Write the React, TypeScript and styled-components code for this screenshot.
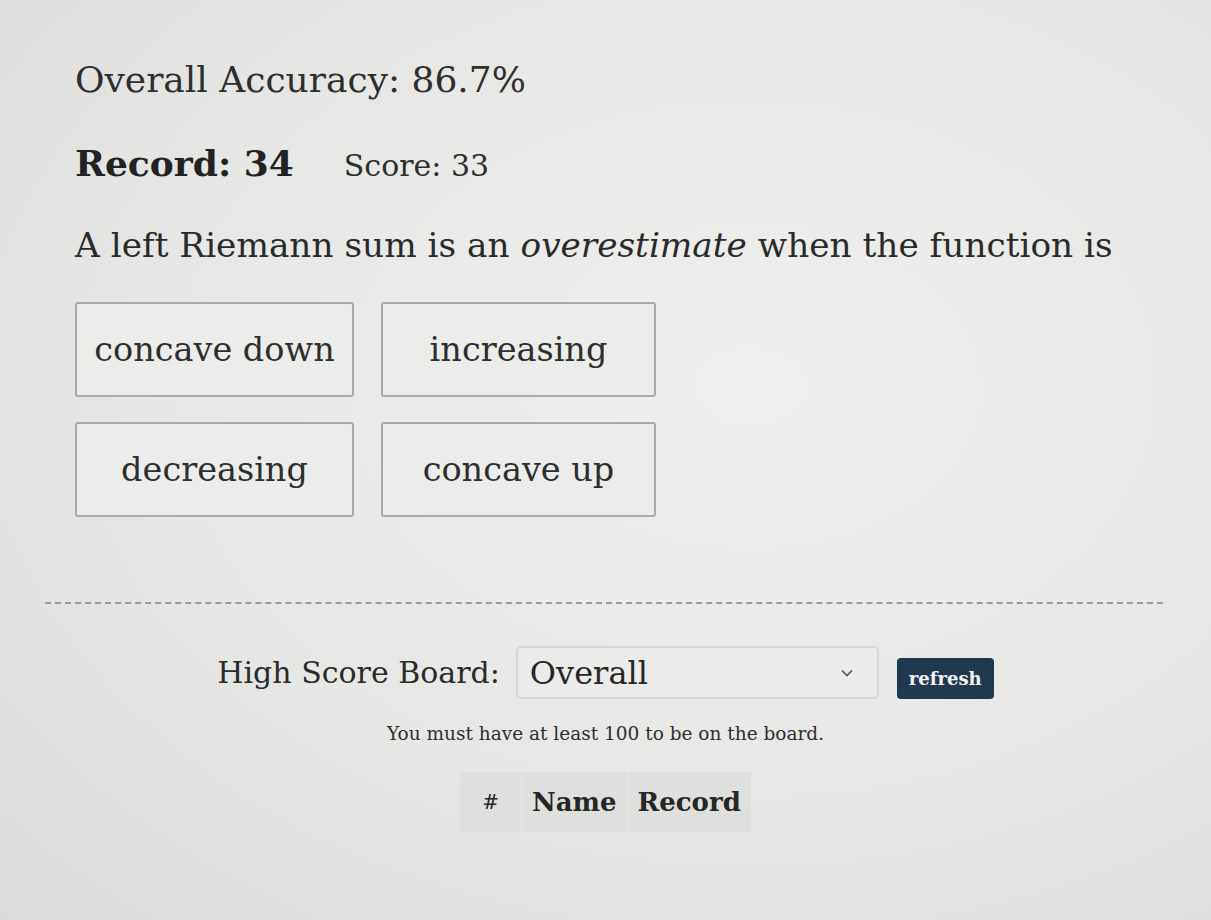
import React from "react";
import styled, { createGlobalStyle } from "styled-components";

const GlobalStyle = createGlobalStyle`
  html, body {
    margin: 0;
    padding: 0;
    background: #e7e8e5;
  }
  body {
    font-family: "DejaVu Serif", "Liberation Serif", serif;
    color: #2a2a2a;
  }
`;

const Page = styled.div`
  min-height: 920px;
  box-sizing: border-box;
  padding: 52px 45px 0 45px;
  background: radial-gradient(ellipse at 62% 42%, #eff0ed 0%, #e7e8e5 55%, #dbdcda 100%);
`;

const Quiz = styled.section`
  padding-left: 30px;
  display: flex;
  flex-direction: column;
`;

const Accuracy = styled.div`
  font-size: 36px;
  line-height: 56px;
  color: #2e2e2e;
`;

const StatLine = styled.div`
  margin-top: 31px;
  display: flex;
  align-items: baseline;
  gap: 50px;
  line-height: 48px;
`;

const Record = styled.span`
  font-size: 36px;
  font-weight: bold;
  color: #222;
`;

const Score = styled.span`
  font-size: 30px;
  color: #2e2e2e;
`;

const Question = styled.div`
  margin-top: 29px;
  font-size: 34.3px;
  line-height: 52px;
  color: #2a2a2a;
  em {
    font-style: italic;
  }
`;

const Choices = styled.div`
  margin-top: 31px;
  display: grid;
  grid-template-columns: 279px 275px;
  column-gap: 27px;
  row-gap: 25px;
`;

const Choice = styled.button`
  height: 95px;
  box-sizing: border-box;
  border: 2px solid #a9aaa8;
  border-radius: 3px;
  background: #ecedea;
  font-family: inherit;
  font-size: 33.5px;
  color: #2e2e2e;
  padding: 0 8px;
  cursor: pointer;
`;

const Divider = styled.hr`
  margin: 85px 0 0 0;
  border: none;
  border-top: 2px dashed #9c9d9b;
  width: 1118px;
`;

const Board = styled.section`
  margin-top: 42px;
  display: flex;
  flex-direction: column;
  align-items: center;
`;

const BoardHeader = styled.div`
  display: flex;
  align-items: center;
  gap: 16px;
`;

const BoardLabel = styled.span`
  font-size: 30px;
  color: #2a2a2a;
`;

const Select = styled.div`
  width: 363px;
  height: 53px;
  box-sizing: border-box;
  border: 2px solid #d6d7d4;
  border-radius: 5px;
  background: #ebece9;
  display: flex;
  align-items: center;
  justify-content: space-between;
  padding: 0 22px 0 12px;
  font-size: 32px;
  color: #262626;
`;

const Chevron = styled.svg`
  width: 16px;
  height: 16px;
`;

const RefreshButton = styled.button`
  margin-left: 2px;
  height: 41px;
  padding: 0 12px;
  border: none;
  border-radius: 4px;
  background: #20394f;
  color: #f2f2f2;
  font-family: inherit;
  font-size: 18px;
  font-weight: bold;
  margin-top: 12px;
`;

const Notice = styled.p`
  margin: 24px 0 0 0;
  font-size: 18.5px;
  color: #2e2e2e;
`;

const Table = styled.table`
  margin-top: 28px;
  border-collapse: collapse;
  background: #dfe0dd;
`;

const HeadCell = styled.th<{ $light?: boolean }>`
  height: 60px;
  padding: 0 10px;
  font-size: 26px;
  font-weight: ${(p) => (p.$light ? "normal" : "bold")};
  color: #262626;
  border-left: 1px solid #e9eae7;
  &:first-child {
    border-left: none;
    padding: 0 22px;
    font-size: 20px;
  }
`;

export default function App() {
  const options = ["concave down", "increasing", "decreasing", "concave up"];
  return (
    <>
      <GlobalStyle />
      <Page>
        <Quiz>
          <Accuracy>Overall Accuracy: 86.7%</Accuracy>
          <StatLine>
            <Record>Record: 34</Record>
            <Score>Score: 33</Score>
          </StatLine>
          <Question>
            A left Riemann sum is an <em>overestimate</em> when the function is
          </Question>
          <Choices>
            {options.map((o) => (
              <Choice key={o}>{o}</Choice>
            ))}
          </Choices>
        </Quiz>
        <Divider />
        <Board>
          <BoardHeader>
            <BoardLabel>High Score Board:</BoardLabel>
            <Select>
              <span>Overall</span>
              <Chevron viewBox="0 0 16 16" fill="none" stroke="#555" strokeWidth="1.6">
                <path d="M3 5.5 L8 10.5 L13 5.5" />
              </Chevron>
            </Select>
            <RefreshButton>refresh</RefreshButton>
          </BoardHeader>
          <Notice>You must have at least 100 to be on the board.</Notice>
          <Table>
            <thead>
              <tr>
                <HeadCell $light>#</HeadCell>
                <HeadCell>Name</HeadCell>
                <HeadCell>Record</HeadCell>
              </tr>
            </thead>
          </Table>
        </Board>
      </Page>
    </>
  );
}
